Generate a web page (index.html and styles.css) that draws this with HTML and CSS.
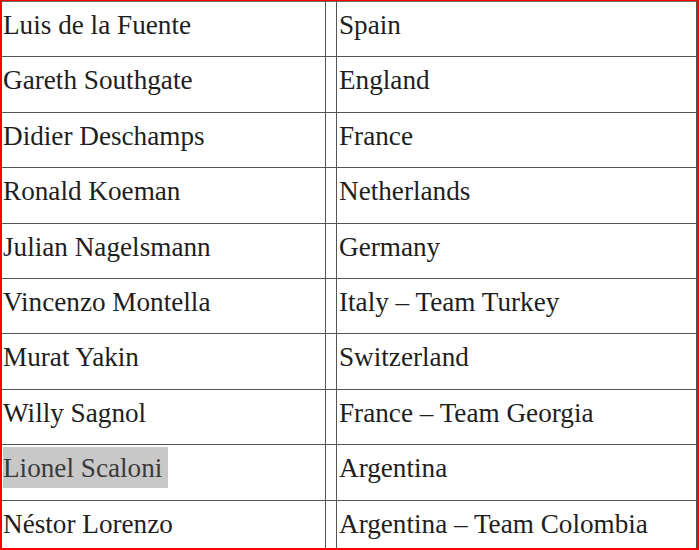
FILE: index.html
```html
<!DOCTYPE html>
<html>
<head>
<meta charset="utf-8">
<link rel="stylesheet" href="styles.css">
</head>
<body>
<div class="frame">
  <div class="table">
    <div class="row"><div class="cell name">Luis de la Fuente</div><div class="cell team">Spain</div></div>
    <div class="row"><div class="cell name">Gareth Southgate</div><div class="cell team">England</div></div>
    <div class="row"><div class="cell name">Didier Deschamps</div><div class="cell team">France</div></div>
    <div class="row"><div class="cell name">Ronald Koeman</div><div class="cell team">Netherlands</div></div>
    <div class="row"><div class="cell name">Julian Nagelsmann</div><div class="cell team">Germany</div></div>
    <div class="row"><div class="cell name">Vincenzo Montella</div><div class="cell team">Italy – Team Turkey</div></div>
    <div class="row"><div class="cell name">Murat Yakin</div><div class="cell team">Switzerland</div></div>
    <div class="row"><div class="cell name">Willy Sagnol</div><div class="cell team">France – Team Georgia</div></div>
    <div class="row"><div class="cell name"><span class="hl">Lionel Scaloni</span></div><div class="cell team">Argentina</div></div>
    <div class="row"><div class="cell name">Néstor Lorenzo</div><div class="cell team">Argentina – Team Colombia</div></div>
  </div>
</div>
</body>
</html>
```

FILE: styles.css
```css
html, body {
  margin: 0;
  padding: 0;
  background: #ffffff;
}

.frame {
  width: 699px;
  height: 550px;
  box-sizing: border-box;
  border: 2px solid #ff0000;
  border-top-width: 1px;
  overflow: hidden;
  background: #ffffff;
}

.table {
  border-top: 1px solid #6a6a6a;
  border-right: 1px solid #555555;
  font-family: "Liberation Serif", "Times New Roman", serif;
  font-size: 27.2px;
  color: #1e1e1e;
}

.row {
  display: flex;
  gap: 10px;
  height: 55.4px;
  box-sizing: border-box;
  border-bottom: 1px solid #555555;
}

.cell {
  line-height: 40px;
  padding-top: 3px;
  white-space: nowrap;
}

.name {
  width: 324px;
  box-sizing: border-box;
  border-right: 1px solid #555555;
  padding-left: 1px;
}

.team {
  flex: 1;
  border-left: 1px solid #555555;
  padding-left: 2px;
}

.hl {
  display: inline-block;
  background: #c8c8c8;
  color: #3a3a3a;
  padding-right: 6px;
  padding-top: 1px;
  margin-top: -2px;
}
```
